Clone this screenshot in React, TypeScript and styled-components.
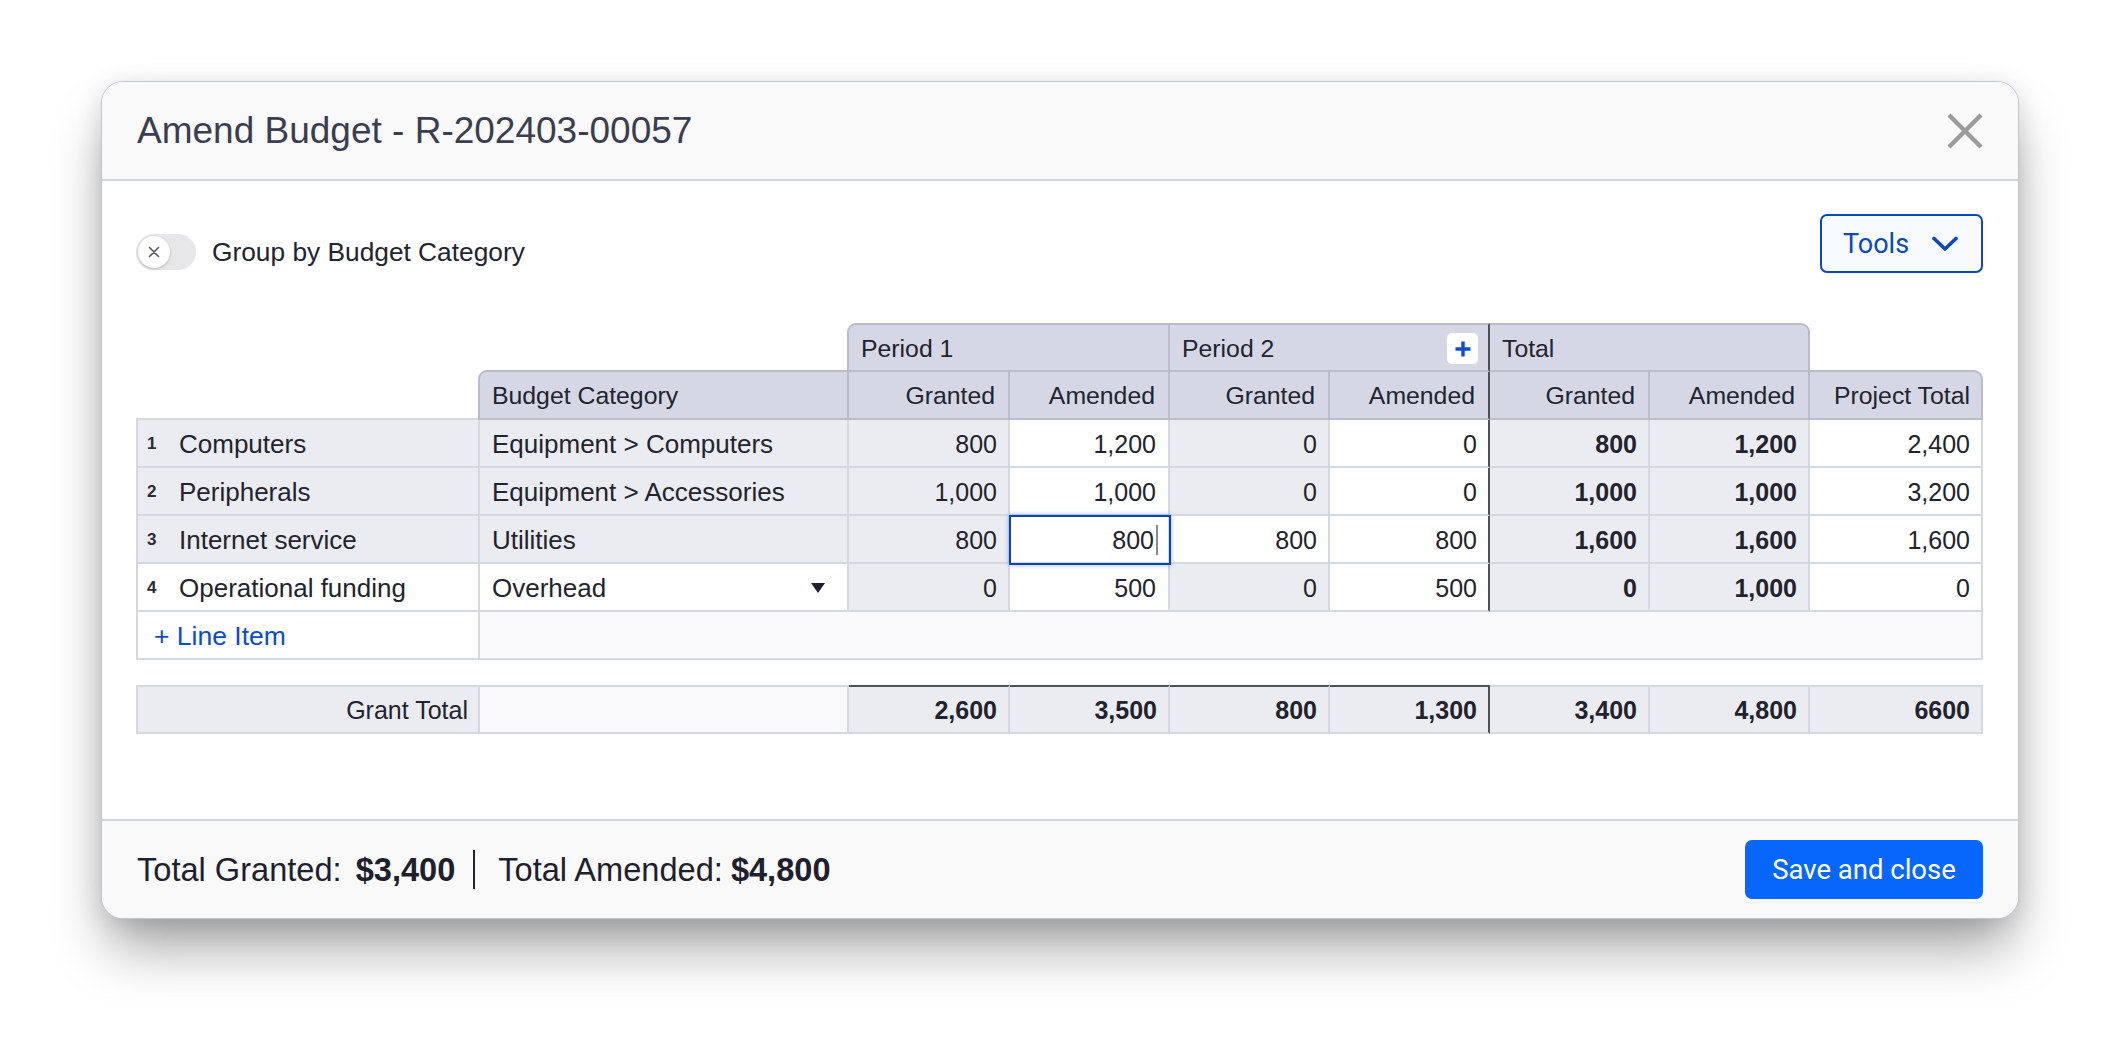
import React from "react";
import styled, { createGlobalStyle, css } from "styled-components";

const GlobalStyle = createGlobalStyle`
  *, *::before, *::after { box-sizing: border-box; }
  html, body { margin: 0; padding: 0; background: #ffffff; }
  body {
    font-family: "Liberation Sans", Arial, Helvetica, sans-serif;
    color: #22232e;
    -webkit-font-smoothing: antialiased;
  }
`;

const LINE = "#d6d8e1";
const HEAD_LINE = "#babdc9";
const DARK = "#4e4f57";

type Tone = "head" | "grey" | "white" | "faint";
const BG: Record<Tone, string> = {
  head: "#d5d8e4",
  grey: "#ebecf1",
  white: "#ffffff",
  faint: "#f9f9fb",
};

const Page = styled.div`
  width: 2120px;
  height: 1040px;
  padding-top: 81px;
  display: flex;
  justify-content: center;
  align-items: flex-start;
  overflow: hidden;
`;

const Modal = styled.section`
  width: 1918px;
  background: #ffffff;
  border: 1px solid #c3c5ce;
  border-radius: 22px;
  overflow: hidden;
  box-shadow: 0 36px 56px -8px rgba(0, 0, 0, 0.36), 0 4px 26px rgba(0, 0, 0, 0.12);
  display: flex;
  flex-direction: column;
`;

const Header = styled.header`
  height: 99px;
  flex: none;
  display: flex;
  align-items: center;
  justify-content: space-between;
  padding: 0 35px;
  background: #f9f9fa;
  border-bottom: 2px solid #d3d5df;
`;

const Title = styled.h1`
  margin: 0;
  font-size: 37px;
  font-weight: 400;
  color: #3b3d50;
`;

const IconButton = styled.button`
  width: 36px;
  height: 36px;
  padding: 0;
  border: 0;
  background: transparent;
  display: flex;
  cursor: pointer;
`;

const Body = styled.div`
  padding: 33px 35px 85px 34px;
  display: flex;
  flex-direction: column;
`;

const Toolbar = styled.div`
  height: 59px;
  display: flex;
  justify-content: space-between;
  align-items: flex-start;
`;

const ToggleGroup = styled.label`
  margin-top: 20px;
  display: flex;
  align-items: center;
  gap: 16px;
  font-size: 26.3px;
  color: #23242f;
`;

const Track = styled.span`
  width: 60px;
  height: 36px;
  border-radius: 18px;
  background: #e7e7ea;
  padding: 2px;
  display: flex;
  align-items: center;
`;

const Knob = styled.span`
  width: 32px;
  height: 32px;
  border-radius: 50%;
  background: #ffffff;
  box-shadow: 0 1px 3px rgba(0, 0, 0, 0.22);
  display: flex;
  align-items: center;
  justify-content: center;
`;

const ToolsButton = styled.button`
  width: 163px;
  height: 59px;
  border: 2px solid #0b49b8;
  border-radius: 7px;
  background: #f7faff;
  color: #0b49b8;
  font-family: Roboto, "Liberation Sans", sans-serif;
  font-size: 27px;
  display: flex;
  align-items: center;
  justify-content: space-between;
  padding: 0 23px 0 21px;
  cursor: pointer;
`;

const Grid = styled.div<{ $first: number; $gapTop: number }>`
  display: grid;
  grid-template-columns: 344px 369px 161px repeat(5, 160px) 173px;
  grid-template-rows: ${(p) => p.$first}px;
  grid-auto-rows: 48px;
  margin-top: ${(p) => p.$gapTop}px;
`;

const Blank = styled.div<{ $span?: number; $underline?: boolean }>`
  grid-column: span ${(p) => p.$span ?? 1};
  ${(p) =>
    p.$underline &&
    css`
      border-bottom: 2px solid ${LINE};
    `}
`;

interface CellProps {
  $tone: Tone;
  $head?: boolean;
  $right?: boolean;
  $between?: boolean;
  $bold?: boolean;
  $span?: number;
  $edgeLeft?: boolean;
  $pullLeft?: boolean;
  $edgeTop?: boolean;
  $pullTop?: boolean;
  $darkRight?: boolean;
  $darkTop?: boolean;
  $tl?: boolean;
  $tr?: boolean;
  $focus?: boolean;
  $padL?: number;
  $padR?: number;
}

const Cell = styled.div<CellProps>`
  grid-column: span ${(p) => p.$span ?? 1};
  display: flex;
  align-items: center;
  justify-content: ${(p) => (p.$between ? "space-between" : p.$right ? "flex-end" : "flex-start")};
  padding: 2px ${(p) => p.$padR ?? (p.$right ? 11 : 12)}px 0 ${(p) => p.$padL ?? 12}px;
  background: ${(p) => BG[p.$tone]};
  font-size: ${(p) => (p.$head ? 24.8 : p.$right ? 25 : 26)}px;
  font-weight: ${(p) => (p.$bold ? 700 : 400)};
  color: #22232e;
  white-space: nowrap;
  border-right: 2px solid ${(p) => (p.$darkRight ? DARK : p.$head ? HEAD_LINE : LINE)};
  border-bottom: 2px solid ${(p) => (p.$head ? HEAD_LINE : LINE)};
  border-top-left-radius: ${(p) => (p.$tl ? 9 : 0)}px;
  border-top-right-radius: ${(p) => (p.$tr ? 9 : 0)}px;
  ${(p) =>
    (p.$edgeLeft || p.$pullLeft) &&
    css`
      border-left: 2px solid ${p.$head ? HEAD_LINE : LINE};
    `}
  ${(p) =>
    p.$pullLeft &&
    css`
      margin-left: -2px;
    `}
  ${(p) =>
    (p.$edgeTop || p.$pullTop || p.$darkTop) &&
    css`
      border-top: 2px solid ${p.$darkTop ? DARK : p.$head ? HEAD_LINE : LINE};
    `}
  ${(p) =>
    p.$pullTop &&
    css`
      margin-top: -2px;
    `}
  ${(p) =>
    p.$focus &&
    css`
      position: relative;
      z-index: 1;
      outline: 2px solid #0b47b3;
      outline-offset: -1px;
      box-shadow: 0 0 5px 1px rgba(30, 90, 220, 0.45);
    `}
`;

const RowNum = styled.span`
  width: 21px;
  margin-right: 11px;
  font-size: 17px;
  font-weight: 700;
  color: #2a2b36;
`;

const Caret = styled.span`
  display: inline-block;
  width: 2px;
  height: 30px;
  margin-left: 2px;
  background: #8a8a8e;
`;

const AddPeriod = styled.button`
  width: 31px;
  height: 31px;
  padding: 0;
  border: 0;
  border-radius: 5px;
  background: #ffffff;
  display: flex;
  align-items: center;
  justify-content: center;
  cursor: pointer;
`;

const AddLine = styled.button`
  padding: 0;
  border: 0;
  background: transparent;
  font-family: inherit;
  font-size: 26.5px;
  color: #0b4dc2;
  cursor: pointer;
`;

const Footer = styled.footer`
  height: 99px;
  flex: none;
  display: flex;
  align-items: center;
  justify-content: space-between;
  padding: 0 35px;
  background: #f9f9fa;
  border-top: 2px solid #d3d5df;
`;

const Summary = styled.div`
  display: flex;
  align-items: center;
  font-size: 32.6px;
  color: #1f202d;
`;

const SumValue = styled.strong<{ $gap: number }>`
  font-weight: 700;
  margin-left: ${(p) => p.$gap}px;
`;

const Divider = styled.span`
  width: 2px;
  height: 39px;
  background: #22232e;
  margin: 0 23px 0 18px;
`;

const SaveButton = styled.button`
  width: 238px;
  height: 59px;
  border: 0;
  border-radius: 7px;
  background: #0767fd;
  color: #ffffff;
  font-family: Roboto, "Liberation Sans", sans-serif;
  font-size: 27.5px;
  cursor: pointer;
`;

type Row = {
  n: number;
  name: string;
  cat: string;
  vals: string[];
  whiteName?: boolean;
  dropdown?: boolean;
  whiteP2g?: boolean;
  focusP1a?: boolean;
};

const rows: Row[] = [
  { n: 1, name: "Computers", cat: "Equipment > Computers", vals: ["800", "1,200", "0", "0", "800", "1,200", "2,400"] },
  { n: 2, name: "Peripherals", cat: "Equipment > Accessories", vals: ["1,000", "1,000", "0", "0", "1,000", "1,000", "3,200"] },
  {
    n: 3,
    name: "Internet service",
    cat: "Utilities",
    vals: ["800", "800", "800", "800", "1,600", "1,600", "1,600"],
    whiteP2g: true,
    focusP1a: true,
  },
  {
    n: 4,
    name: "Operational funding",
    cat: "Overhead",
    vals: ["0", "500", "0", "500", "0", "1,000", "0"],
    whiteName: true,
    dropdown: true,
  },
];

const grandTotals = ["2,600", "3,500", "800", "1,300", "3,400", "4,800", "6600"];

const CloseIcon = () => (
  <svg width="36" height="36" viewBox="0 0 36 36">
    <path d="M2 2L34 34M34 2L2 34" stroke="#9b9b9b" strokeWidth="4.4" />
  </svg>
);

const Chevron = () => (
  <svg width="26" height="16" viewBox="0 0 26 16">
    <path d="M2 2.5L13 13L24 2.5" fill="none" stroke="#0b49b8" strokeWidth="3.6" strokeLinecap="round" strokeLinejoin="round" />
  </svg>
);

const SmallX = () => (
  <svg width="12" height="12" viewBox="0 0 12 12">
    <path d="M1.5 1.5L10.5 10.5M10.5 1.5L1.5 10.5" stroke="#55565e" strokeWidth="1.6" strokeLinecap="round" />
  </svg>
);

const Plus = () => (
  <svg width="18" height="18" viewBox="0 0 18 18">
    <path d="M9 1.5V16.5M1.5 9H16.5" stroke="#0b4fc6" strokeWidth="3.4" />
  </svg>
);

const Caret3 = () => (
  <svg width="14" height="10" viewBox="0 0 14 10">
    <path d="M0 0H14L7 10Z" fill="#1f2030" />
  </svg>
);

export default function App() {
  return (
    <>
      <GlobalStyle />
      <Page>
        <Modal>
          <Header>
            <Title>Amend Budget - R-202403-00057</Title>
            <IconButton aria-label="Close">
              <CloseIcon />
            </IconButton>
          </Header>

          <Body>
            <Toolbar>
              <ToggleGroup>
                <Track>
                  <Knob>
                    <SmallX />
                  </Knob>
                </Track>
                Group by Budget Category
              </ToggleGroup>
              <ToolsButton>
                Tools
                <Chevron />
              </ToolsButton>
            </Toolbar>

            <Grid $first={49} $gapTop={50}>
              {/* header row A */}
              <Blank $span={2} />
              <Cell $tone="head" $head $span={2} $pullLeft $edgeTop $tl>
                Period 1
              </Cell>
              <Cell $tone="head" $head $span={2} $edgeTop $darkRight $between $padR={10}>
                Period 2
                <AddPeriod aria-label="Add period">
                  <Plus />
                </AddPeriod>
              </Cell>
              <Cell $tone="head" $head $span={2} $edgeTop $tr>
                Total
              </Cell>
              <Blank />

              {/* header row B */}
              <Blank $underline />
              <Cell $tone="head" $head $pullLeft $pullTop $tl>
                Budget Category
              </Cell>
              <Cell $tone="head" $head $right $padR={13}>Granted</Cell>
              <Cell $tone="head" $head $right $padR={13}>Amended</Cell>
              <Cell $tone="head" $head $right $padR={13}>Granted</Cell>
              <Cell $tone="head" $head $right $padR={13} $darkRight>Amended</Cell>
              <Cell $tone="head" $head $right $padR={13}>Granted</Cell>
              <Cell $tone="head" $head $right $padR={13}>Amended</Cell>
              <Cell $tone="head" $head $right $padR={11} $pullTop $tr>
                Project Total
              </Cell>

              {/* body rows */}
              {rows.map((r) => (
                <React.Fragment key={r.n}>
                  <Cell $tone={r.whiteName ? "white" : "grey"} $edgeLeft $padL={9}>
                    <RowNum>{r.n}</RowNum>
                    {r.name}
                  </Cell>
                  <Cell $tone={r.whiteName ? "white" : "grey"} $between={r.dropdown} $padR={r.dropdown ? 22 : 12}>
                    {r.cat}
                    {r.dropdown && <Caret3 />}
                  </Cell>
                  <Cell $tone="grey" $right>{r.vals[0]}</Cell>
                  <Cell $tone="white" $right $focus={r.focusP1a} $padR={r.focusP1a ? 10 : 12}>
                    {r.vals[1]}
                    {r.focusP1a && <Caret />}
                  </Cell>
                  <Cell $tone={r.whiteP2g ? "white" : "grey"} $right>{r.vals[2]}</Cell>
                  <Cell $tone="white" $right $darkRight>{r.vals[3]}</Cell>
                  <Cell $tone="grey" $right $bold>{r.vals[4]}</Cell>
                  <Cell $tone="grey" $right $bold>{r.vals[5]}</Cell>
                  <Cell $tone="white" $right>{r.vals[6]}</Cell>
                </React.Fragment>
              ))}

              {/* add line item row */}
              <Cell $tone="white" $edgeLeft $padL={16}>
                <AddLine>+ Line Item</AddLine>
              </Cell>
              <Cell $tone="faint" $span={8} />
            </Grid>

            <Grid $first={49} $gapTop={25}>
              <Cell $tone="grey" $right $edgeLeft $edgeTop $padR={10}>
                Grant Total
              </Cell>
              <Cell $tone="faint" $edgeTop />
              <Cell $tone="grey" $right $bold $darkTop>{grandTotals[0]}</Cell>
              <Cell $tone="grey" $right $bold $darkTop>{grandTotals[1]}</Cell>
              <Cell $tone="grey" $right $bold $darkTop>{grandTotals[2]}</Cell>
              <Cell $tone="grey" $right $bold $darkTop $darkRight>{grandTotals[3]}</Cell>
              <Cell $tone="grey" $right $bold $edgeTop>{grandTotals[4]}</Cell>
              <Cell $tone="grey" $right $bold $edgeTop>{grandTotals[5]}</Cell>
              <Cell $tone="grey" $right $bold $edgeTop>{grandTotals[6]}</Cell>
            </Grid>
          </Body>

          <Footer>
            <Summary>
              <span>Total Granted:</span>
              <SumValue $gap={14}>$3,400</SumValue>
              <Divider />
              <span>Total Amended:</span>
              <SumValue $gap={8}>$4,800</SumValue>
            </Summary>
            <SaveButton>Save and close</SaveButton>
          </Footer>
        </Modal>
      </Page>
    </>
  );
}
